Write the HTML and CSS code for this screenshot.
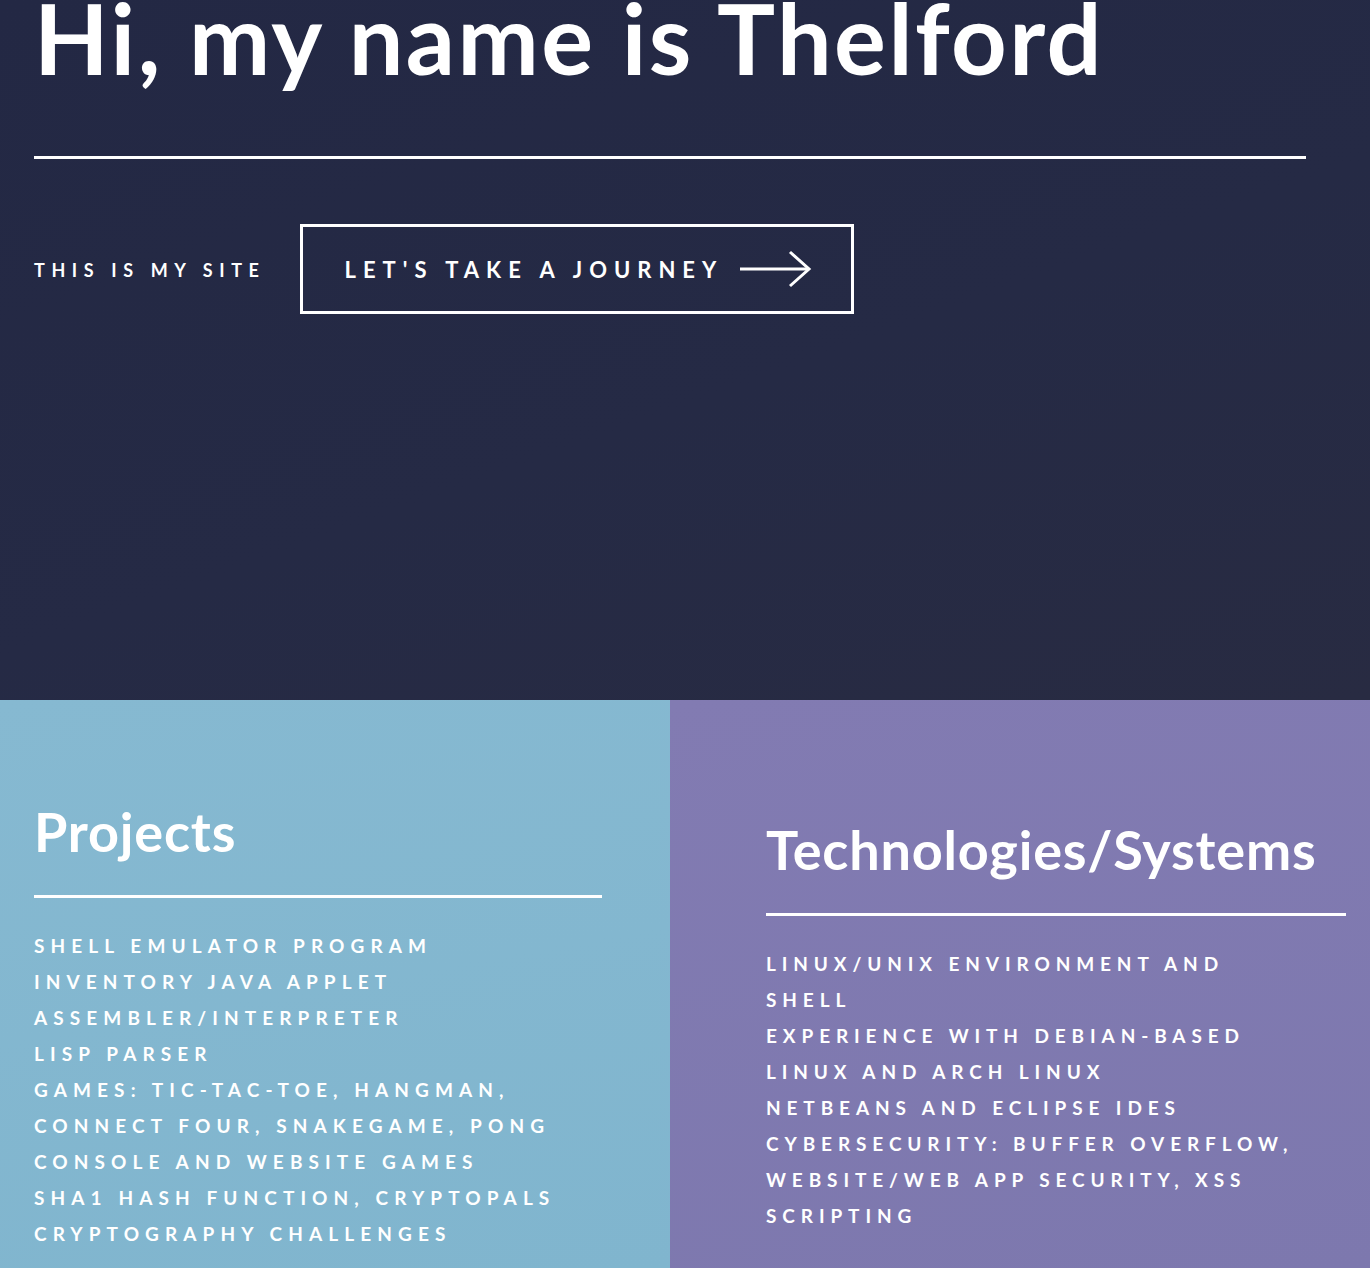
FILE: index.html
```html
<!DOCTYPE html>
<html lang="en">
<head>
<meta charset="utf-8">
<title>Thelford</title>
<link rel="stylesheet" href="styles.css">
</head>
<body>
<header class="hero">
  <h1 class="hero-title">Hi, my name is Thelford</h1>
  <hr class="rule hero-rule">
  <div class="hero-row">
    <span class="tagline">This is my site</span>
    <a class="journey" href="#projects">
      <span class="journey-text">Let's take a journey</span>
      <svg class="arrow" width="72" height="40" viewBox="0 0 72 40" aria-hidden="true">
        <path d="M0 20 H68" stroke="#fff" stroke-width="3" fill="none"/>
        <path d="M50 3 L69 20 L50 37" stroke="#fff" stroke-width="3" fill="none"/>
      </svg>
    </a>
  </div>
</header>
<main class="panels" id="projects">
  <section class="panel panel-projects">
    <h2 class="panel-title">Projects</h2>
    <hr class="rule">
    <ul class="items">
      <li>Shell emulator program</li>
      <li>Inventory Java applet</li>
      <li>Assembler/Interpreter</li>
      <li>Lisp parser</li>
      <li>Games: Tic-Tac-Toe, Hangman, Connect Four, Snakegame, Pong console and website games</li>
      <li>SHA1 hash function, Cryptopals cryptography challenges</li>
    </ul>
  </section>
  <section class="panel panel-tech">
    <h2 class="panel-title">Technologies/Systems</h2>
    <hr class="rule">
    <ul class="items">
      <li>Linux/Unix environment and shell</li>
      <li>Experience with Debian-based Linux and Arch Linux</li>
      <li>Netbeans and Eclipse IDEs</li>
      <li>Cybersecurity: buffer overflow, website/web app security, XSS scripting</li>
    </ul>
  </section>
</main>
</body>
</html>
```
FILE: styles.css
```css
html, body {
  margin: 0;
  padding: 0;
}
body {
  font-family: "Lato", "Open Sans", sans-serif;
  color: #fff;
  background: #252a45;
  overflow: hidden;
}
.hero {
  display: flow-root;
  height: 700px;
  box-sizing: border-box;
  padding: 0 64px 0 34px;
  background: linear-gradient(160deg, #232844 0%, #252a45 55%, #282b42 100%);
}
.hero-title {
  margin: -11px 0 0 0;
  font-size: 97px;
  line-height: 1;
  font-weight: 700;
  letter-spacing: 2.5px;
  white-space: nowrap;
}
.rule {
  border: 0;
  height: 3px;
  background: #fff;
  margin: 0;
}
.hero-rule {
  margin-top: 70px;
}
.hero-row {
  display: flex;
  align-items: center;
  gap: 34px;
  margin-top: 65px;
}
.tagline {
  text-transform: uppercase;
  font-weight: 700;
  font-size: 18px;
  letter-spacing: 6.6px;
  padding-top: 2px;
}
.journey {
  display: flex;
  align-items: center;
  gap: 17px;
  box-sizing: border-box;
  width: 554px;
  height: 90px;
  padding: 0 0 0 42px;
  border: 3px solid #fff;
  color: #fff;
  text-decoration: none;
}
.journey-text {
  text-transform: uppercase;
  font-weight: 700;
  font-size: 22px;
  letter-spacing: 7px;
}
.arrow {
  display: block;
}
.panels {
  display: flex;
  height: 568px;
}
.panel {
  box-sizing: border-box;
}
.panel-projects {
  width: 670px;
  padding: 100px 68px 0 34px;
  background: linear-gradient(170deg, #86b9d1 0%, #80b5ce 100%);
}
.panel-tech {
  flex: 1;
  padding: 118px 24px 0 96px;
  background: linear-gradient(170deg, #827bb2 0%, #7d78ae 100%);
}
.panel-title {
  margin: 0 0 30px 0;
  font-size: 54px;
  line-height: 1.2;
  font-weight: 700;
  letter-spacing: 0.8px;
}
.items {
  list-style: none;
  margin: 30px 0 0 0;
  padding: 0;
}
.items li {
  text-transform: uppercase;
  font-weight: 700;
  font-size: 19px;
  line-height: 36px;
  letter-spacing: 6.1px;
}
.panel-projects .items {
  max-width: 560px;
}
.panel-tech .items {
  max-width: 540px;
  letter-spacing: 0;
}
.panel-tech .items li {
  letter-spacing: 5.9px;
}
```
